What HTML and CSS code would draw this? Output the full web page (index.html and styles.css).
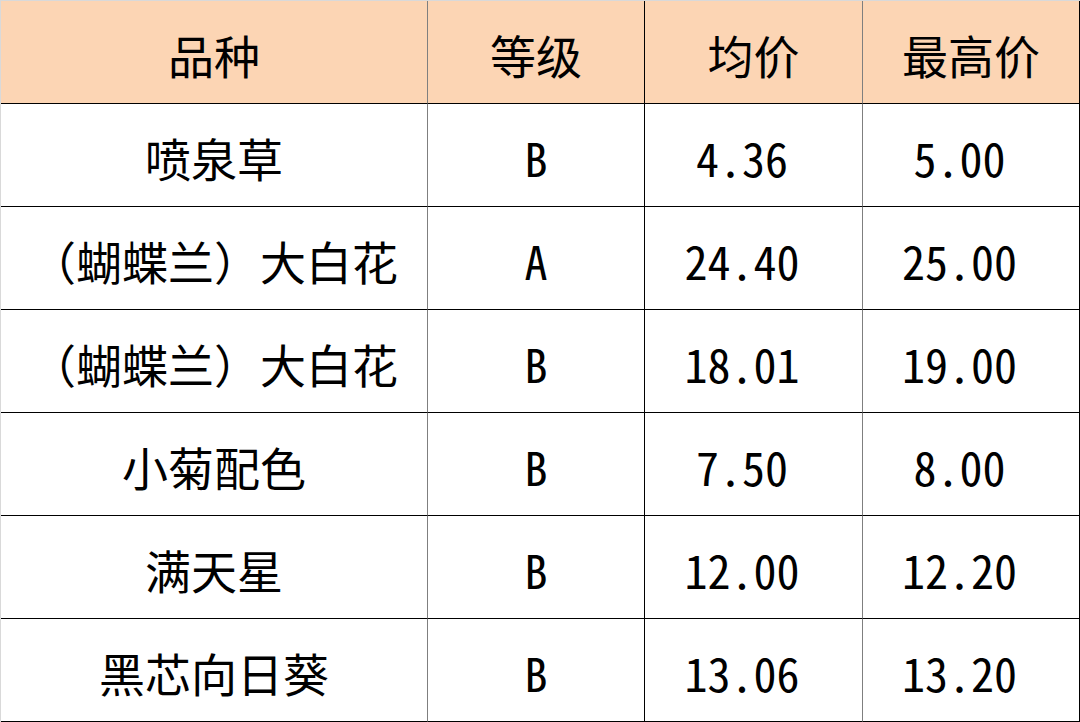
FILE: index.html
```html
<!DOCTYPE html>
<html lang="zh-CN">
<head>
<meta charset="utf-8">
<title>品种价格表</title>
<link rel="stylesheet" href="styles.css">
</head>
<body>
<div class="table">
  <div class="cell head c1">品种</div>
  <div class="cell head c2">等级</div>
  <div class="cell head c3">均价</div>
  <div class="cell head c4">最高价</div>

  <div class="cell c1">喷泉草</div>
  <div class="cell c2 hw">B</div>
  <div class="cell c3 hw num">4.36</div>
  <div class="cell c4 hw num">5.00</div>

  <div class="cell c1">（蝴蝶兰）大白花</div>
  <div class="cell c2 hw">A</div>
  <div class="cell c3 hw num">24.40</div>
  <div class="cell c4 hw num">25.00</div>

  <div class="cell c1">（蝴蝶兰）大白花</div>
  <div class="cell c2 hw">B</div>
  <div class="cell c3 hw num">18.01</div>
  <div class="cell c4 hw num">19.00</div>

  <div class="cell c1">小菊配色</div>
  <div class="cell c2 hw">B</div>
  <div class="cell c3 hw num">7.50</div>
  <div class="cell c4 hw num">8.00</div>

  <div class="cell c1">满天星</div>
  <div class="cell c2 hw">B</div>
  <div class="cell c3 hw num">12.00</div>
  <div class="cell c4 hw num">12.20</div>

  <div class="cell c1">黑芯向日葵</div>
  <div class="cell c2 hw">B</div>
  <div class="cell c3 hw num">13.06</div>
  <div class="cell c4 hw num">13.20</div>
</div>
</body>
</html>
```
FILE: styles.css
```css
html, body {
  margin: 0;
  padding: 0;
  background: #ffffff;
}

.table {
  width: 1080px;
  box-sizing: border-box;
  border-top: 1px solid #d9d9d9;
  border-left: 1px solid #d9d9d9;
  display: grid;
  grid-template-columns: 427px 217px 218px 217px;
  grid-auto-rows: 103px;
  font-family: "Noto Sans CJK SC", "Noto Sans", sans-serif;
  font-size: 46px;
  color: #000;
}

.cell {
  box-sizing: border-box;
  border-bottom: 1px solid #000;
  display: flex;
  align-items: center;
  justify-content: center;
  padding-top: 4px;
  white-space: nowrap;
  line-height: 1;
}

.head {
  background: #fcd5b4;
}

.c1 { border-right: 1px solid #7f7f7f; }
.c2 { border-right: 1px solid #000; }
.c3 { border-right: 1px solid #7f7f7f; }
.c4 { border-right: 1px solid #000; }

.hw {
  font-feature-settings: "hwid";
}

.num {
  padding-right: 23px;
}
```
